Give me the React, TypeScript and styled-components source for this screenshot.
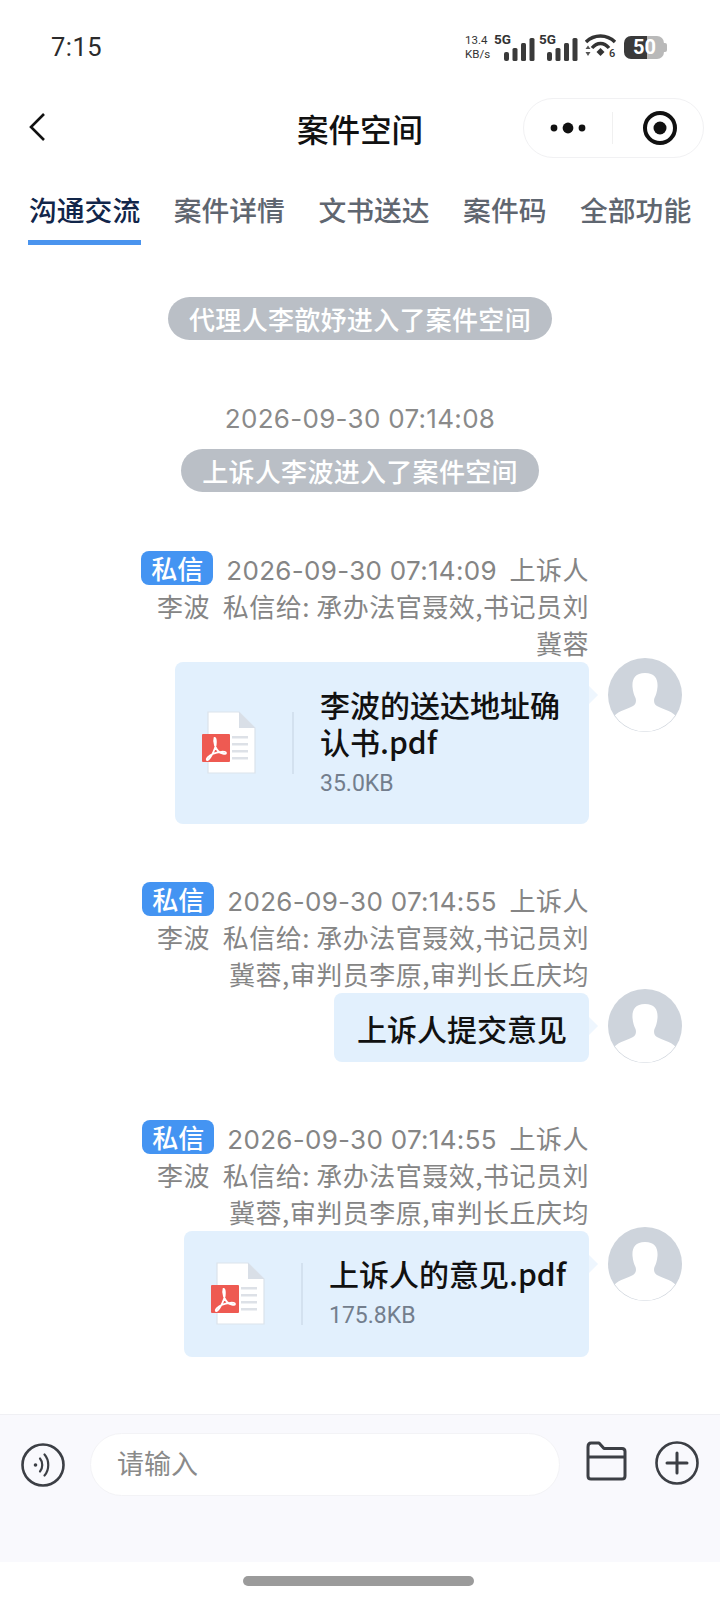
import React from "react";
import styled, { createGlobalStyle } from "styled-components";

const GlobalStyle = createGlobalStyle`
    html, body {
        margin: 0;
        padding: 0;
        background: #fff;
    }
    * {
        box-sizing: border-box;
    }
`;

const FONT = `"Noto Sans CJK SC", "Noto Sans", sans-serif`;

const Page = styled.div`
    width: 720px;
    height: 1600px;
    display: flex;
    flex-direction: column;
    background: #fff;
    font-family: ${FONT};
    overflow: hidden;
`;

const StatusBar = styled.div`
    height: 94px;
    flex: none;
    display: flex;
    align-items: center;
    justify-content: space-between;
    padding: 0 53px 0 51px;
`;

const Clock = styled.span`
    font-family: "Roboto", sans-serif;
    font-size: 25.5px;
    color: #2b2b2b;
    letter-spacing: 0.5px;
`;

const StatusIcons = styled.div`
    display: flex;
    align-items: center;
    height: 26px;
`;

const NetSpeed = styled.div`
    width: 25px;
    font-family: "Roboto", sans-serif;
    font-size: 11.5px;
    line-height: 14px;
    color: #333;
    white-space: nowrap;
`;

const Signal = styled.div<{ $width: number }>`
    position: relative;
    width: ${(p) => p.$width}px;
    height: 26px;
`;

const SignalLabel = styled.span`
    position: absolute;
    left: 4px;
    top: -2px;
    font-family: "Roboto", sans-serif;
    font-size: 13.5px;
    font-weight: 700;
    line-height: 14px;
    color: #333;
`;

const Battery = styled.div`
    position: relative;
    width: 40px;
    height: 23px;
    margin-left: 6px;
    margin-right: 3px;
    border-radius: 7px;
    background: linear-gradient(90deg, #3a3a3a 0 58%, #b9b9b9 58% 100%);
    font-family: "Roboto", sans-serif;
    font-size: 20px;
    font-weight: 700;
    line-height: 23px;
    color: #fff;
    padding-left: 9px;

    &::after {
        content: "";
        position: absolute;
        right: -3px;
        top: 7px;
        width: 3px;
        height: 9px;
        border-radius: 0 2px 2px 0;
        background: #b9b9b9;
    }
`;

const NavBar = styled.div`
    position: relative;
    height: 66px;
    flex: none;
    display: flex;
    align-items: center;
    justify-content: center;
    margin-top: 1px;
`;

const BackButton = styled.div`
    position: absolute;
    left: 26px;
    top: 16px;
    line-height: 0;
`;

const NavTitle = styled.h1`
    margin: 0;
    font-size: 31.5px;
    font-weight: 500;
    color: #111;
`;

const Capsule = styled.div`
    position: absolute;
    right: 16px;
    top: 3px;
    width: 181px;
    height: 60px;
    display: flex;
    align-items: center;
    padding-left: 1px;
    border: 1px solid #f1f1f3;
    border-radius: 30px;
    background: #fff;
`;

const CapsuleSide = styled.div`
    flex: 1;
    display: flex;
    align-items: center;
    justify-content: center;
    line-height: 0;
`;

const TargetSide = styled(CapsuleSide)`
    padding-left: 3px;
`;

const CapsuleDivider = styled.div`
    width: 1px;
    height: 32px;
    background: #f0f0f0;
`;

const Tabs = styled.div`
    flex: none;
    display: flex;
    gap: 33.5px;
    padding: 0 0 0 29px;
    margin-top: 23px;
    height: 62px;
`;

const Tab = styled.div<{ $active?: boolean }>`
    position: relative;
    height: 62px;
    font-size: 27.8px;
    line-height: 50px;
    font-weight: 500;
    color: ${(p) => (p.$active ? "#12264a" : "#5f6670")};
    white-space: nowrap;

    &::after {
        content: "";
        display: ${(p) => (p.$active ? "block" : "none")};
        position: absolute;
        left: -1px;
        right: -1px;
        bottom: 1px;
        height: 5px;
        background: #4a94ee;
    }
`;

const ChatList = styled.div`
    flex: 1;
    display: flex;
    flex-direction: column;
    padding-top: 51px;
`;

const SystemPill = styled.div`
    align-self: center;
    height: 43px;
    padding: 0 21px;
    border-radius: 22px;
    background: #babfc6;
    color: #fff;
    font-size: 26px;
    font-weight: 500;
    letter-spacing: 0.3px;
    line-height: 43px;
    white-space: nowrap;
`;

const TimeStamp = styled.div`
    text-align: center;
    margin-top: 57px;
    margin-bottom: 9px;
    font-family: "Inter", ${FONT};
    font-size: 26px;
    letter-spacing: 0.3px;
    line-height: 43px;
    color: #8a8a8a;
`;

const Message = styled.div<{ $top: number }>`
    display: flex;
    justify-content: flex-end;
    gap: 19px;
    padding-right: 38px;
    margin-top: ${(p) => p.$top}px;
`;

const MessageBody = styled.div`
    width: 450px;
    display: flex;
    flex-direction: column;
    align-items: flex-end;
`;

const Meta = styled.div`
    width: 100%;
    text-align: right;
    font-size: 26px;
    letter-spacing: 0.5px;
    line-height: 37px;
    color: #858585;
`;

const Stamp = styled.span`
    font-family: "Inter", ${FONT};
    font-size: 26px;
    letter-spacing: 0.3px;
    line-height: 1;
`;

const PrivateTag = styled.span`
    display: inline-block;
    height: 34px;
    width: 72px;
    margin-top: 1px;
    margin-right: 13px;
    border-radius: 8px;
    background: #4494f2;
    color: #fff;
    font-size: 26px;
    font-weight: 500;
    letter-spacing: 0;
    line-height: 34px;
    text-align: center;
    vertical-align: top;
`;

const BubbleRow = styled.div`
    position: relative;
    margin-top: 1px;
`;

const Bubble = styled.div<{ $width: number; $height: number }>`
    position: relative;
    width: ${(p) => p.$width}px;
    height: ${(p) => p.$height}px;
    border-radius: 8px;
    background: #e2f0fd;
    display: flex;
    align-items: center;

    &::after {
        content: "";
        position: absolute;
        right: -9px;
        top: 24px;
        width: 0;
        height: 0;
        border-top: 9px solid transparent;
        border-bottom: 9px solid transparent;
        border-left: 9px solid #eef6fe;
    }
`;

const TextContent = styled.div`
    width: 100%;
    padding-left: 23px;
    font-size: 30px;
    font-weight: 500;
    color: #111;
    white-space: nowrap;
`;

const FileIconBox = styled.div`
    flex: none;
    width: 117px;
    padding-left: 26px;
    line-height: 0;
`;

const Divider = styled.div`
    flex: none;
    width: 2px;
    height: 62px;
    background: #d3e1ef;
`;

const FileInfo = styled.div`
    padding-left: 26px;
    padding-bottom: 3px;
    flex: 1;
`;

const FileName = styled.div`
    font-size: 30px;
    font-weight: 500;
    line-height: 37px;
    color: #111;
`;

const FileSize = styled.div`
    margin-top: 10px;
    font-family: "Roboto", ${FONT};
    font-size: 23px;
    line-height: 28px;
    color: #737e8d;
`;

const Avatar = styled.div`
    flex: none;
    width: 74px;
    height: 74px;
    margin-top: 108px;
    line-height: 0;
`;

const InputBar = styled.div`
    flex: none;
    height: 148px;
    background: #f9f9fd;
    border-top: 1px solid #f0f0f4;
    display: flex;
    align-items: flex-start;
    padding: 18px 21px 0;
`;

const VoiceButton = styled.div`
    flex: none;
    width: 44px;
    margin-top: 10px;
    line-height: 0;
`;

const InputField = styled.div`
    width: 471px;
    height: 63px;
    margin-left: 25px;
    padding-left: 26px;
    border-radius: 32px;
    background: #fff;
    border: 1px solid #f3f3f6;
    font-size: 27px;
    line-height: 58px;
    color: #8a8a8a;
`;

const FolderButton = styled.div`
    flex: none;
    width: 42px;
    margin-left: 25px;
    margin-top: 8px;
    line-height: 0;
`;

const PlusButton = styled.div`
    flex: none;
    width: 44px;
    margin-left: 28px;
    margin-top: 8px;
    line-height: 0;
`;

const HomeArea = styled.div`
    flex: none;
    height: 38px;
    padding-top: 14px;
    display: flex;
    justify-content: center;
`;

const HomeBar = styled.div`
    width: 231px;
    height: 10px;
    border-radius: 5px;
    background: #9b9b9b;
    margin-left: -3px;
`;

const Bars = () => (
    <svg width="31" height="23" viewBox="0 0 31 23" style={{ position: "absolute", right: 0, bottom: -1 }}>
        <rect x="0" y="14" width="5" height="9" rx="2" fill="#3a3a3a" />
        <rect x="8.5" y="10" width="5" height="13" rx="1.5" fill="#3a3a3a" />
        <rect x="17" y="5" width="5" height="18" rx="1.5" fill="#3a3a3a" />
        <rect x="25.5" y="0" width="5" height="23" rx="1.5" fill="#3a3a3a" />
    </svg>
);

const WifiIcon = () => (
    <svg width="33" height="26" viewBox="0 0 33 26" style={{ marginLeft: 7 }}>
        <path d="M1 8 C9 0 22 0 30 8" fill="none" stroke="#333" strokeWidth="3.4" />
        <path d="M7 14 C12 8 19 8 24 14" fill="none" stroke="#333" strokeWidth="3.4" />
        <path d="M11.5 18 L15.5 14 L19.5 18 L15.5 22 Z" fill="#333" />
        <path d="M0.5 15 L3 11.5 L5.5 15 Z M0.5 18 L5.5 18 L3 22 Z" fill="#555" />
        <text x="24" y="23" fontFamily="Roboto, sans-serif" fontSize="11" fontWeight="500" fill="#333">6</text>
    </svg>
);

const PdfIcon = () => (
    <svg width="56" height="64" viewBox="0 0 56 64">
        <path d="M7 1 H38 L54 17 V62 H7 Z" fill="#fff" stroke="#dbe3ec" strokeWidth="1.2" />
        <path d="M38 1 L54 17 H38 Z" fill="#d9dfe7" />
        <rect x="31" y="25" width="16" height="2.5" fill="#dde1e7" />
        <rect x="31" y="32" width="16" height="2.5" fill="#dde1e7" />
        <rect x="31" y="39" width="16" height="2.5" fill="#dde1e7" />
        <rect x="31" y="46" width="16" height="2.5" fill="#dde1e7" />
        <rect x="1" y="23" width="28" height="28" rx="1" fill="#ee5a52" />
        <path d="M13.5 27 C12 31 15 38 17 40 C19.5 42.5 25 44 25 42 C25 40 17 40.5 11.5 43 C8 44.5 5 48 6 49 C7.5 50 12 43 14 37 C15 34 15.5 27 13.5 27 Z" fill="none" stroke="#fff" strokeWidth="1.8" />
    </svg>
);

const AvatarIcon = () => (
    <svg width="74" height="74" viewBox="0 0 74 74">
        <defs>
            <clipPath id="avatar-clip">
                <circle cx="37" cy="37" r="36.5" />
            </clipPath>
        </defs>
        <circle cx="37" cy="37" r="37" fill="#ced4dc" />
        <g clipPath="url(#avatar-clip)">
            <path d="M37 15 C47 15 50 21 49.5 29 C49 34 48 37 46.5 40 C45.5 43 46 46 49 48 C54 51 62 52 68 58 L68 76 L6 76 L6 58 C12 52 20 51 25 48 C28 46 28.5 43 27.5 40 C26 37 25 34 24.5 29 C24 21 27 15 37 15 Z" fill="#fff" />
        </g>
    </svg>
);

interface MetaLinesProps {
    time: string;
    to: string;
}

const MetaLines = ({ time, to }: MetaLinesProps) => (
    <Meta>
        <PrivateTag>私信</PrivateTag>
        <Stamp>{time}</Stamp>&nbsp;&nbsp;上诉人李波&nbsp;&nbsp;私信给: {to}
    </Meta>
);

interface FileBubbleProps {
    name: string;
    size: string;
    width: number;
    height: number;
}

const FileBubble = ({ name, size, width, height }: FileBubbleProps) => (
    <Bubble $width={width} $height={height}>
        <FileIconBox>
            <PdfIcon />
        </FileIconBox>
        <Divider />
        <FileInfo>
            <FileName>{name}</FileName>
            <FileSize>{size}</FileSize>
        </FileInfo>
    </Bubble>
);

export default function App() {
    return (
        <Page>
            <GlobalStyle />
            <StatusBar>
                <Clock>7:15</Clock>
                <StatusIcons>
                    <NetSpeed>13.4<br />KB/s</NetSpeed>
                    <Signal $width={45}><SignalLabel>5G</SignalLabel><Bars /></Signal>
                    <Signal $width={43}><SignalLabel>5G</SignalLabel><Bars /></Signal>
                    <WifiIcon />
                    <Battery>50</Battery>
                </StatusIcons>
            </StatusBar>
            <NavBar>
                <BackButton>
                    <svg width="24" height="32" viewBox="0 0 24 32">
                        <path d="M18 3 L5 16 L18 29" fill="none" stroke="#111" strokeWidth="2.6" />
                    </svg>
                </BackButton>
                <NavTitle>案件空间</NavTitle>
                <Capsule>
                    <CapsuleSide>
                        <svg width="40" height="14" viewBox="0 0 40 14">
                            <circle cx="5" cy="7" r="3.4" fill="#111" />
                            <circle cx="19" cy="7" r="5.4" fill="#111" />
                            <circle cx="33" cy="7" r="3.4" fill="#111" />
                        </svg>
                    </CapsuleSide>
                    <CapsuleDivider />
                    <TargetSide>
                        <svg width="36" height="36" viewBox="0 0 36 36">
                            <circle cx="18" cy="18" r="15" fill="none" stroke="#111" strokeWidth="4" />
                            <circle cx="18" cy="18" r="6.5" fill="#111" />
                        </svg>
                    </TargetSide>
                </Capsule>
            </NavBar>
            <Tabs>
                <Tab $active>沟通交流</Tab>
                <Tab>案件详情</Tab>
                <Tab>文书送达</Tab>
                <Tab>案件码</Tab>
                <Tab>全部功能</Tab>
            </Tabs>
            <ChatList>
                <SystemPill>代理人李歆妤进入了案件空间</SystemPill>
                <TimeStamp>2026-09-30 07:14:08</TimeStamp>
                <SystemPill>上诉人李波进入了案件空间</SystemPill>

                <Message $top={58}>
                    <MessageBody>
                        <MetaLines time="2026-09-30 07:14:09" to="承办法官聂效,书记员刘冀蓉" />
                        <BubbleRow>
                            <FileBubble name="李波的送达地址确认书.pdf" size="35.0KB" width={414} height={162} />
                        </BubbleRow>
                    </MessageBody>
                    <Avatar><AvatarIcon /></Avatar>
                </Message>

                <Message $top={57}>
                    <MessageBody>
                        <MetaLines time="2026-09-30 07:14:55" to="承办法官聂效,书记员刘冀蓉,审判员李原,审判长丘庆均" />
                        <BubbleRow>
                            <Bubble $width={255} $height={69}>
                                <TextContent>上诉人提交意见</TextContent>
                            </Bubble>
                        </BubbleRow>
                    </MessageBody>
                    <Avatar><AvatarIcon /></Avatar>
                </Message>

                <Message $top={56}>
                    <MessageBody>
                        <MetaLines time="2026-09-30 07:14:55" to="承办法官聂效,书记员刘冀蓉,审判员李原,审判长丘庆均" />
                        <BubbleRow>
                            <FileBubble name="上诉人的意见.pdf" size="175.8KB" width={405} height={126} />
                        </BubbleRow>
                    </MessageBody>
                    <Avatar><AvatarIcon /></Avatar>
                </Message>
            </ChatList>
            <InputBar>
                <VoiceButton>
                    <svg width="44" height="44" viewBox="0 0 44 44">
                        <circle cx="22" cy="22" r="20.5" fill="none" stroke="#3c3f45" strokeWidth="2.6" />
                        <circle cx="14.5" cy="22" r="1.8" fill="#3c3f45" />
                        <path d="M19 15.5 C22 19 22 25 19 28.5" fill="none" stroke="#3c3f45" strokeWidth="2.2" strokeLinecap="round" />
                        <path d="M23.5 11.5 C28.5 17 28.5 27 23.5 32.5" fill="none" stroke="#3c3f45" strokeWidth="2.2" strokeLinecap="round" />
                    </svg>
                </VoiceButton>
                <InputField>请输入</InputField>
                <FolderButton>
                    <svg width="42" height="40" viewBox="0 0 42 40">
                        <path d="M3 6 C3 3.5 4 2 6 2 H14 L19 7.5 H37 C39 7.5 40 9 40 10.5 V35 C40 37 39 38 37 38 H6 C4 38 3 37 3 35 Z" fill="none" stroke="#3c3f45" strokeWidth="3" strokeLinejoin="round" />
                        <path d="M3 16 H40" stroke="#3c3f45" strokeWidth="3" />
                    </svg>
                </FolderButton>
                <PlusButton>
                    <svg width="44" height="44" viewBox="0 0 44 44">
                        <circle cx="22" cy="22" r="20.5" fill="none" stroke="#3c3f45" strokeWidth="2.6" />
                        <path d="M22 12 V32 M12 22 H32" stroke="#3c3f45" strokeWidth="3" strokeLinecap="round" />
                    </svg>
                </PlusButton>
            </InputBar>
            <HomeArea>
                <HomeBar />
            </HomeArea>
        </Page>
    );
}
